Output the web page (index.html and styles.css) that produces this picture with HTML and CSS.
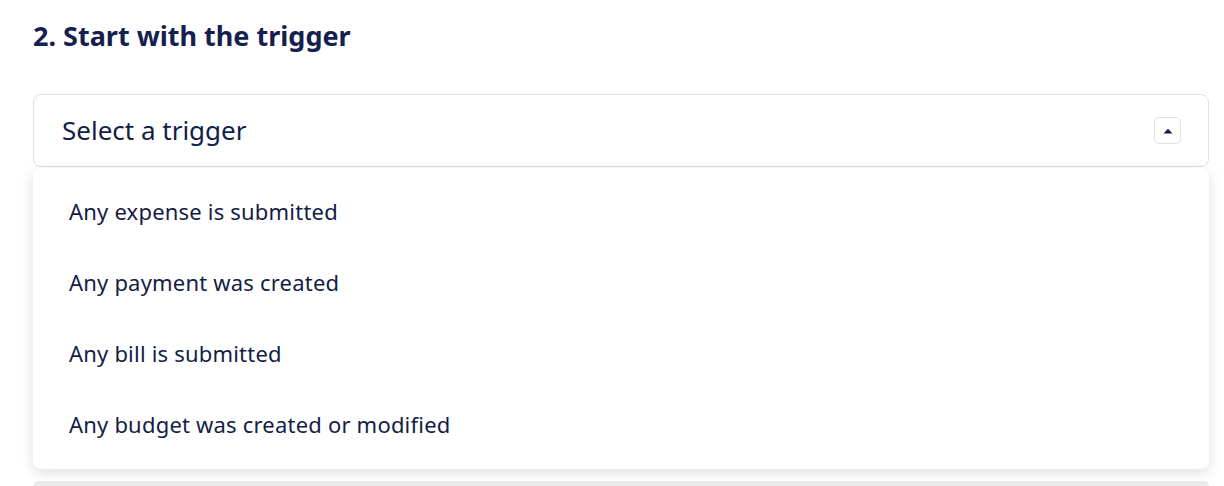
FILE: index.html
```html
<!DOCTYPE html>
<html lang="en">
<head>
<meta charset="utf-8">
<link rel="stylesheet" href="styles.css">
</head>
<body>
<section class="step">
  <h2 class="step-title">2. Start with the trigger</h2>
  <div class="select">
    <div class="select-head">
      <span class="select-label">Select a trigger</span>
      <button class="toggle" type="button" aria-label="Collapse">
        <svg width="10" height="6" viewBox="0 0 10 6"><path d="M0.5 5.5 L5 0.8 L9.5 5.5 Z" fill="#141d45"/></svg>
      </button>
    </div>
    <ul class="menu">
      <li class="menu-item">Any expense is submitted</li>
      <li class="menu-item">Any payment was created</li>
      <li class="menu-item">Any bill is submitted</li>
      <li class="menu-item">Any budget was created or modified</li>
    </ul>
  </div>
  <div class="next-card"></div>
</section>
</body>
</html>
```

FILE: styles.css
```css
html, body {
  margin: 0;
  padding: 0;
  background: #ffffff;
}
body {
  font-family: "Noto Sans", "Lato", sans-serif;
  color: #141d45;
}
.step {
  padding: 0 15px 0 33px;
}
.step-title {
  margin: 0;
  padding-top: 18px;
  font-size: 27px;
  line-height: 36px;
  font-weight: 700;
  color: #16204f;
  height: 94px;
  box-sizing: border-box;
}
.select {
  position: relative;
}
.select-head {
  display: flex;
  align-items: center;
  justify-content: space-between;
  height: 73px;
  box-sizing: border-box;
  border: 1px solid #e1e1e1;
  border-radius: 8px;
  padding: 0 27px 0 28px;
  background: #fff;
}
.select-label {
  font-size: 26px;
  color: #141d45;
  margin-top: -2px;
}
.toggle {
  width: 27px;
  height: 27px;
  border: 1px solid #e3e3e3;
  border-radius: 5px;
  background: #fff;
  display: flex;
  align-items: center;
  justify-content: center;
  padding: 0;
}
.menu {
  list-style: none;
  margin: 1px 0 0;
  padding: 7px 0 10px;
  background: #fff;
  border-radius: 8px;
  box-shadow: 0 4px 14px rgba(0, 0, 0, 0.13);
  position: relative;
  z-index: 2;
}
.menu-item {
  height: 71px;
  display: flex;
  align-items: center;
  padding-left: 36px;
  font-size: 22px;
  letter-spacing: 0.2px;
  color: #141d45;
}
.next-card {
  margin-top: 12px;
  height: 5px;
  background: #ebebeb;
  border-radius: 8px 8px 0 0;
}
```
